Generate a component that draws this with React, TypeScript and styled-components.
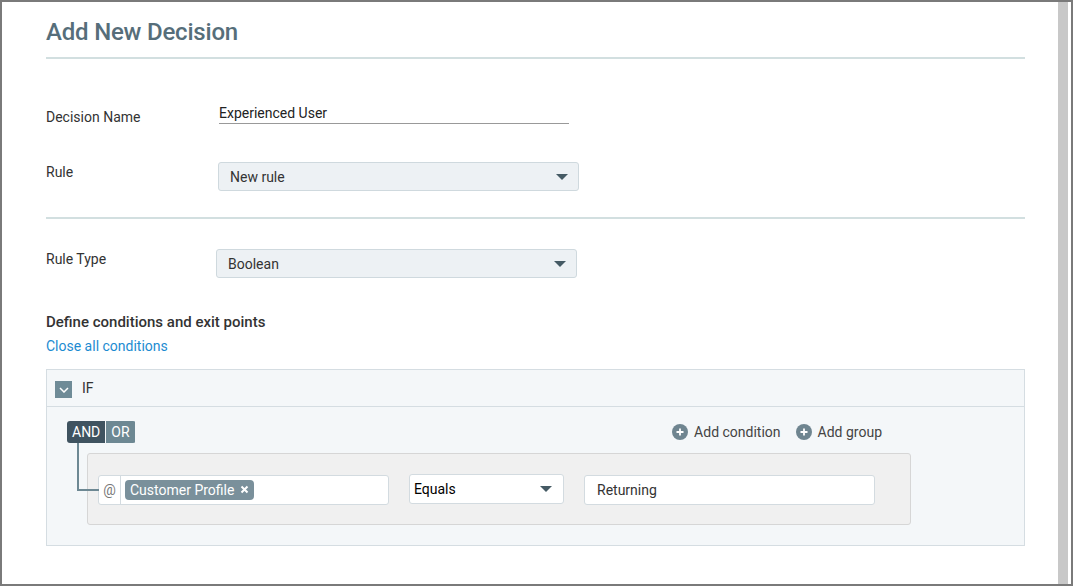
import React from "react";
import styled, { createGlobalStyle } from "styled-components";

const Global = createGlobalStyle`
  html, body { margin: 0; padding: 0; background: #fff; }
  body { font-family: Roboto, "Liberation Sans", sans-serif; }
`;

const Frame = styled.div`
  box-sizing: border-box;
  width: 1073px;
  height: 586px;
  border: 2px solid #7a7a7a;
  display: flex;
  overflow: hidden;
`;

const Content = styled.div`
  flex: 1;
  padding: 0 33px 0 44px;
`;

const Scrollbar = styled.div`
  width: 10px;
  background: #c8c8c8;
  margin-right: 3px;
`;

const Title = styled.h1`
  margin: 0;
  padding-top: 16px;
  height: 39px;
  font-size: 24px;
  font-weight: 500;
  color: #566e7a;
  border-bottom: 2px solid #d2dfe0;
  letter-spacing: -0.2px;
`;

const Row = styled.div<{ $top: number; $h: number }>`
  display: flex;
  align-items: flex-start;
  margin-top: ${(p) => p.$top}px;
  height: ${(p) => p.$h}px;
`;

const Label = styled.div<{ $pt: number }>`
  width: 170px;
  padding-top: ${(p) => p.$pt}px;
  font-size: 14px;
  color: #333;
`;

const TextInput = styled.div`
  margin-left: 3px;
  width: 350px;
  font-size: 14px;
  color: #222;
  border-bottom: 1px solid #999;
  padding-bottom: 2px;
`;

const Select = styled.div<{ $ml: number }>`
  box-sizing: border-box;
  margin-left: ${(p) => p.$ml}px;
  width: 361px;
  height: 29px;
  background: #edf1f4;
  border: 1px solid #cfd9de;
  border-radius: 3px;
  display: flex;
  align-items: center;
  justify-content: space-between;
  padding: 0 10px 0 11px;
  font-size: 14px;
  color: #333;
`;

const Caret = styled.span`
  width: 0;
  height: 0;
  border-left: 6px solid transparent;
  border-right: 6px solid transparent;
  border-top: 6px solid #455a64;
`;

const Divider = styled.div`
  border-top: 2px solid #d2dfe0;
  margin-top: 25px;
`;

const SectionTitle = styled.div`
  margin-top: 34px;
  font-size: 15px;
  font-weight: 500;
  color: #333;
`;

const Link = styled.div`
  margin-top: 7px;
  font-size: 14px;
  color: #1c8bd1;
`;

const IfBox = styled.div`
  margin-top: 15px;
  height: 177px;
  box-sizing: border-box;
  border: 1px solid #d5dde2;
  background: #f4f7f9;
`;

const IfHeader = styled.div`
  height: 36px;
  border-bottom: 1px solid #d5dde2;
  display: flex;
  align-items: center;
  gap: 10px;
  padding-left: 8px;
  font-size: 14px;
  color: #333;
`;

const Chevron = styled.div`
  width: 17px;
  height: 17px;
  background: #6f8b97;
  display: flex;
  align-items: center;
  justify-content: center;
  margin-top: 3px;
`;

const Body = styled.div`
  padding: 14px 0 0 20px;
  position: relative;
`;

const TopBar = styled.div`
  display: flex;
  align-items: center;
  justify-content: space-between;
  width: 815px;
`;

const Toggle = styled.div`
  display: flex;
  border-radius: 3px;
  overflow: hidden;
  font-size: 14px;
  color: #fff;
  height: 22px;
`;

const ToggleBtn = styled.div<{ $active?: boolean }>`
  background: ${(p) => (p.$active ? "#3f5360" : "#6d8893")};
  padding: 0 5px;
  display: flex;
  align-items: center;
  margin-right: 1px;
`;

const Actions = styled.div`
  display: flex;
  gap: 15px;
  font-size: 14px;
  color: #444;
`;

const Action = styled.div`
  display: flex;
  align-items: center;
  gap: 6px;
`;

const Connector = styled.div`
  position: absolute;
  left: 30px;
  top: 36px;
  width: 20px;
  height: 46px;
  border-left: 2px solid #6d8893;
  border-bottom: 2px solid #6d8893;
`;

const CondBox = styled.div`
  box-sizing: border-box;
  margin: 10px 0 0 20px;
  width: 824px;
  height: 72px;
  background: #f0f0f0;
  border: 1px solid #d6d6d6;
  border-radius: 3px;
  display: flex;
  align-items: center;
  padding-left: 10px;
  padding-top: 1px;
`;

const Field = styled.div<{ $w: number; $ml?: number }>`
  box-sizing: border-box;
  width: ${(p) => p.$w}px;
  margin-left: ${(p) => p.$ml ?? 0}px;
  height: 30px;
  background: #fff;
  border: 1px solid #d3dbe0;
  border-radius: 3px;
  display: flex;
  align-items: center;
  font-size: 14px;
  color: #333;
`;

const At = styled.div`
  width: 21px;
  height: 100%;
  border-right: 1px solid #d3dbe0;
  display: flex;
  align-items: center;
  justify-content: center;
  color: #777;
`;

const Chip = styled.div`
  margin-left: 4px;
  background: #7a909b;
  color: #fff;
  border-radius: 4px;
  height: 20px;
  padding: 0 5px;
  display: flex;
  align-items: center;
  gap: 6px;
`;

const EqualsField = styled(Field)`
  justify-content: space-between;
  padding: 0 11px 0 4px;
  color: #000;
  margin-top: -2px;
`;

const PlusIcon = () => (
  <svg width="16" height="16" viewBox="0 0 16 16">
    <circle cx="8" cy="8" r="8" fill="#6f8590" />
    <path d="M8 4.5v7M4.5 8h7" stroke="#fff" strokeWidth="1.8" />
  </svg>
);

export default function App() {
  return (
    <>
      <Global />
      <Frame>
        <Content>
          <Title>Add New Decision</Title>
          <Row $top={46} $h={20}>
            <Label $pt={4}>Decision Name</Label>
            <TextInput>Experienced User</TextInput>
          </Row>
          <Row $top={37} $h={30}>
            <Label $pt={2}>Rule</Label>
            <Select $ml={2}>
              New rule
              <Caret />
            </Select>
          </Row>
          <Divider />
          <Row $top={30} $h={30}>
            <Label $pt={2}>Rule Type</Label>
            <Select $ml={0}>
              Boolean
              <Caret />
            </Select>
          </Row>
          <SectionTitle>Define conditions and exit points</SectionTitle>
          <Link>Close all conditions</Link>
          <IfBox>
            <IfHeader>
              <Chevron>
                <svg width="10" height="6" viewBox="0 0 10 6">
                  <path d="M1 1l4 4 4-4" stroke="#fff" strokeWidth="1.5" fill="none" />
                </svg>
              </Chevron>
              IF
            </IfHeader>
            <Body>
              <TopBar>
                <Toggle>
                  <ToggleBtn $active>AND</ToggleBtn>
                  <ToggleBtn>OR</ToggleBtn>
                </Toggle>
                <Actions>
                  <Action>
                    <PlusIcon />
                    Add condition
                  </Action>
                  <Action>
                    <PlusIcon />
                    Add group
                  </Action>
                </Actions>
              </TopBar>
              <Connector />
              <CondBox>
                <Field $w={291}>
                  <At>@</At>
                  <Chip>
                    Customer Profile
                    <svg width="9" height="9" viewBox="0 0 9 9">
                      <path d="M1.5 1.5l6 6M7.5 1.5l-6 6" stroke="#fff" strokeWidth="2" />
                    </svg>
                  </Chip>
                </Field>
                <EqualsField $w={155} $ml={20}>
                  Equals
                  <Caret />
                </EqualsField>
                <Field $w={291} $ml={20} style={{ paddingLeft: 12 }}>
                  Returning
                </Field>
              </CondBox>
            </Body>
          </IfBox>
        </Content>
        <Scrollbar />
      </Frame>
    </>
  );
}
